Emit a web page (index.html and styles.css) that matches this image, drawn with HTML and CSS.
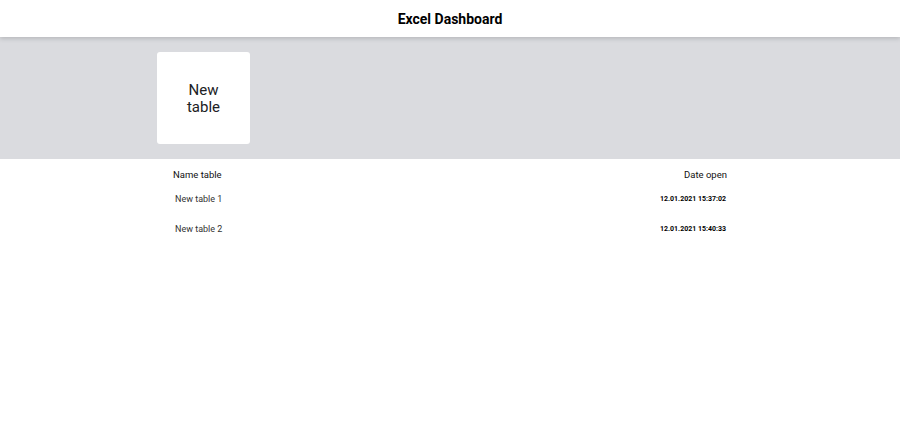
FILE: index.html
```html
<!DOCTYPE html>
<html lang="en">
<head>
    <meta charset="UTF-8">
    <title>Excel Dashboard</title>
    <link rel="stylesheet" href="styles.css">
</head>
<body>
    <div class="db">
        <div class="db__header">
            <h1>Excel Dashboard</h1>
        </div>
        <div class="db__new">
            <div class="db__view">
                <a href="#" class="db__create">New <br> table</a>
            </div>
        </div>
        <div class="db__table db__view">
            <div class="db__list-header">
                <span>Name table</span>
                <span>Date open</span>
            </div>
            <ul class="db__list">
                <li class="db__record">
                    <a href="#">New table 1</a>
                    <strong>12.01.2021 15:37:02</strong>
                </li>
                <li class="db__record">
                    <a href="#">New table 2</a>
                    <strong>12.01.2021 15:40:33</strong>
                </li>
            </ul>
        </div>
    </div>
</body>
</html>
```

FILE: styles.css
```css
* {
    box-sizing: border-box;
    margin: 0;
    padding: 0;
}
body {
    font-family: Roboto, "Liberation Sans", sans-serif;
    color: #000;
    background: #fff;
}
.db__header {
    height: 37px;
    display: flex;
    align-items: center;
    justify-content: center;
    background: #fff;
    box-shadow: 0 2px 4px rgba(60, 64, 67, 0.2);
    position: relative;
    z-index: 1;
}
.db__header h1 {
    font-size: 14px;
    font-weight: 700;
}
.db__new {
    background: #dadbdf;
    padding: 15px 0 15px;
}
.db__view {
    width: 586px;
    margin: 0 auto;
}
.db__create {
    width: 93px;
    height: 92px;
    display: flex;
    align-items: center;
    justify-content: center;
    text-align: center;
    background: #fff;
    border-radius: 3px;
    color: #202124;
    text-decoration: none;
    font-size: 15px;
    line-height: 17px;
    padding-top: 2px;
}
.db__table {
    padding: 10px 16px 0;
}
.db__list-header {
    display: flex;
    justify-content: space-between;
    font-size: 9.5px;
    font-weight: 400;
    color: #111;
    line-height: 12px;
}
.db__list {
    list-style: none;
}
.db__record {
    display: flex;
    justify-content: space-between;
    align-items: center;
    height: 30px;
    padding: 0 1px 0 2px;
}
.db__record:first-child {
    margin-top: 3px;
}
.db__record a {
    font-size: 9px;
    color: #333;
    text-decoration: none;
}
.db__record strong {
    font-size: 7px;
    font-weight: 700;
}
```
